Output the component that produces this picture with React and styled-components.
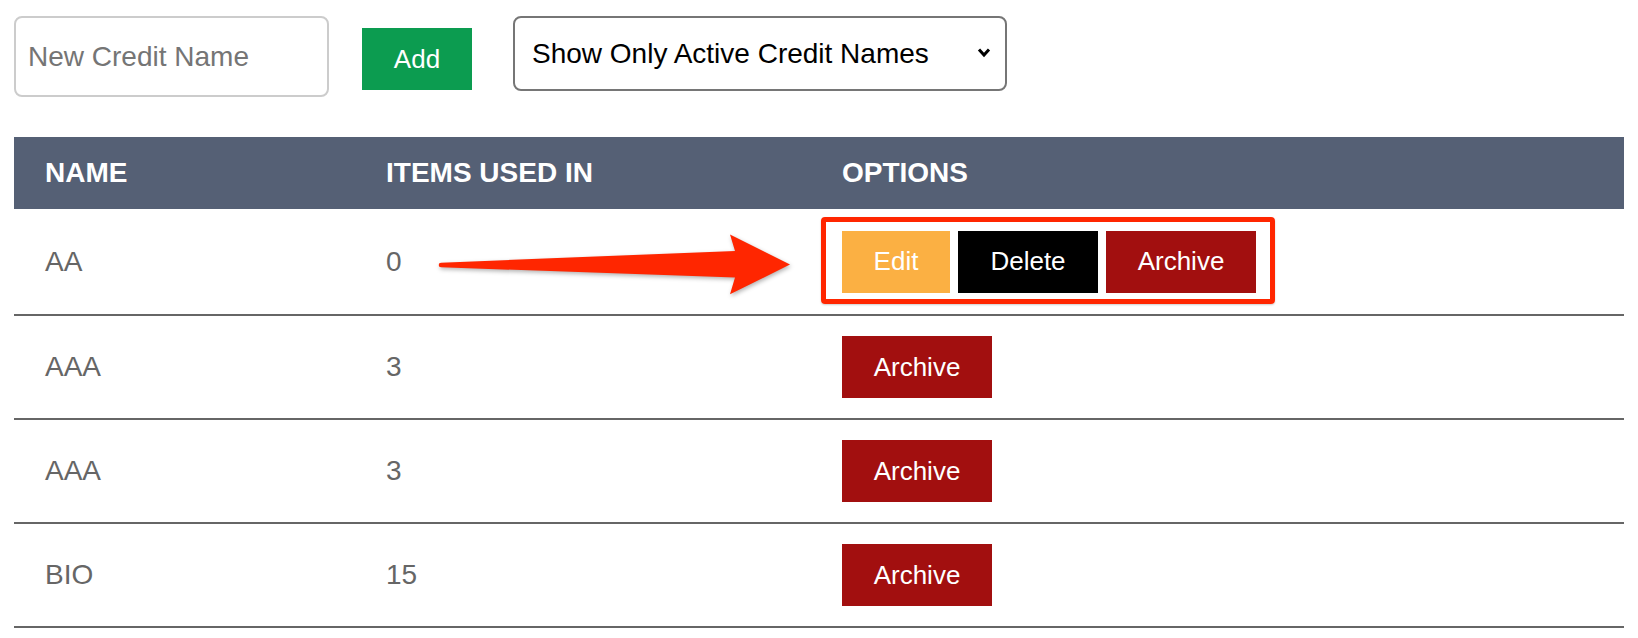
import React from "react";
import styled, { createGlobalStyle } from "styled-components";

const GlobalStyle = createGlobalStyle`
  body {
    margin: 0;
    background: #ffffff;
    font-family: "Liberation Sans", Arial, Helvetica, sans-serif;
  }
`;

const Page = styled.div`
  padding: 16px 14px 0;
`;

const Toolbar = styled.div`
  display: flex;
  align-items: flex-start;
  margin-bottom: 40px;
`;

const NameInput = styled.input`
  box-sizing: border-box;
  width: 315px;
  height: 81px;
  padding: 0 12px;
  border: 2px solid #cccccc;
  border-radius: 8px;
  font-family: inherit;
  font-size: 28px;
  color: #333;
  outline: none;
  &::placeholder {
    color: #757575;
  }
`;

const AddButton = styled.button`
  width: 110px;
  height: 62px;
  margin: 12px 0 0 33px;
  border: none;
  background: #0c9c50;
  color: #ffffff;
  font-family: inherit;
  font-size: 26px;
  cursor: pointer;
`;

const SelectWrap = styled.div`
  position: relative;
  margin-left: 41px;
`;

const Select = styled.select`
  box-sizing: border-box;
  width: 494px;
  height: 75px;
  padding: 0 40px 0 17px;
  border: 2px solid #767676;
  border-radius: 8px;
  background: #ffffff;
  appearance: none;
  font-family: inherit;
  font-size: 28px;
  color: #000000;
`;

const Chevron = styled.svg`
  position: absolute;
  right: 16px;
  top: 31px;
  pointer-events: none;
`;

const Table = styled.div`
  position: relative;
`;

const Row = styled.div`
  display: grid;
  grid-template-columns: 341px 456px 1fr;
  align-items: center;
  box-sizing: border-box;
  height: ${(p) => p.$height}px;
  background: ${(p) => (p.$head ? "#556075" : "#ffffff")};
  border-bottom: ${(p) => (p.$head ? "none" : "2px solid #666666")};
`;

const Cell = styled.div`
  padding-left: 31px;
  font-size: 28px;
  color: ${(p) => (p.$head ? "#ffffff" : "#666666")};
  font-weight: ${(p) => (p.$head ? 700 : 400)};
  text-transform: ${(p) => (p.$head ? "uppercase" : "none")};
`;

const Options = styled.div`
  position: relative;
  display: flex;
  gap: 8px;
  padding-left: 31px;
`;

const Highlight = styled.div`
  position: absolute;
  left: 10px;
  right: ${(p) => p.$right}px;
  top: -14px;
  bottom: -11px;
  border: 5px solid #ff2600;
  border-radius: 4px;
  box-shadow: 0 1px 2px rgba(0, 0, 0, 0.2);
  pointer-events: none;
`;

const COLORS = {
  edit: "#fbb043",
  delete: "#000000",
  archive: "#a20f0f",
};

const ActionButton = styled.button`
  width: ${(p) => p.$width}px;
  height: 62px;
  border: none;
  background: ${(p) => COLORS[p.$kind]};
  color: #ffffff;
  font-family: inherit;
  font-size: 26px;
  cursor: pointer;
`;

const Arrow = styled.svg`
  position: absolute;
  left: 411px;
  top: 88px;
  overflow: visible;
  filter: drop-shadow(1px 2px 2px rgba(0, 0, 0, 0.3));
  pointer-events: none;
`;

const credits = [
  { name: "AA", items: 0, full: true },
  { name: "AAA", items: 3 },
  { name: "AAA", items: 3 },
  { name: "BIO", items: 15 },
];

export default function App() {
  return (
    <Page>
      <GlobalStyle />
      <Toolbar>
        <NameInput placeholder="New Credit Name" />
        <AddButton>Add</AddButton>
        <SelectWrap>
          <Select defaultValue="active">
            <option value="active">Show Only Active Credit Names</option>
            <option value="all">Show All Credit Names</option>
          </Select>
          <Chevron width="14" height="11" viewBox="0 0 14 11">
            <path d="M2 2.5 L7 8 L12 2.5" fill="none" stroke="#000" strokeWidth="3" />
          </Chevron>
        </SelectWrap>
      </Toolbar>

      <Table>
        <Row $head $height={72}>
          <Cell $head>Name</Cell>
          <Cell $head>Items Used In</Cell>
          <Cell $head>Options</Cell>
        </Row>
        {credits.map((c, i) => (
          <Row key={i} $height={i === 0 ? 107 : 104}>
            <Cell>{c.name}</Cell>
            <Cell>{c.items}</Cell>
            {c.full ? (
              <Options>
                <ActionButton $kind="edit" $width={108}>Edit</ActionButton>
                <ActionButton $kind="delete" $width={140}>Delete</ActionButton>
                <ActionButton $kind="archive" $width={150}>Archive</ActionButton>
                <Highlight $right={349} />
              </Options>
            ) : (
              <Options>
                <ActionButton $kind="archive" $width={150}>Archive</ActionButton>
              </Options>
            )}
          </Row>
        ))}
        <Arrow width="380" height="80" viewBox="425 225 380 80">
          <path
            d="M441 262.7 L735 251 L730 234.5 L790 264.5 L730 294.3 L735 277.5 L441 267.3 A2.3 2.3 0 0 1 441 262.7 Z"
            fill="#ff2600"
          />
        </Arrow>
      </Table>
    </Page>
  );
}
